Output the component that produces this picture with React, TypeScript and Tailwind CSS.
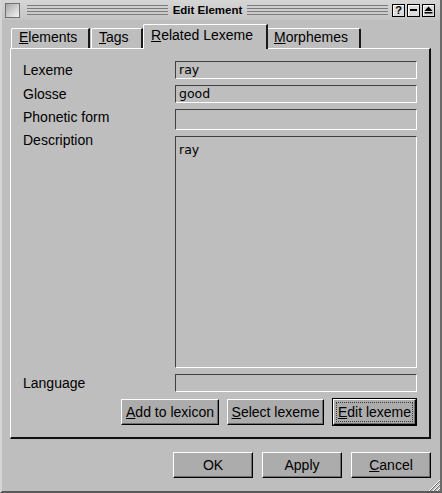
import React from 'react';

const Lines = () => (
  <div className="flex-1 flex flex-col gap-[2px]">
    <div className="h-px bg-[#7c7c7c]" />
    <div className="h-px bg-[#7c7c7c]" />
    <div className="h-px bg-[#7c7c7c]" />
    <div className="h-px bg-[#7c7c7c]" />
  </div>
);

const TitleButton = ({ children }: { children: React.ReactNode }) => (
  <div className="w-[13px] h-[13px] border border-black bg-[#dcdcdc] flex items-center justify-center shadow-[inset_1px_1px_0_#ffffff]">
    {children}
  </div>
);

const Field = ({ value, h }: { value?: string; h: string }) => (
  <div
    className={`${h} w-[242px] border border-t-[#404040] border-l-[#404040] border-b-white border-r-white pl-[3px] flex items-center text-[12.5px] leading-[16px] text-black`}
    style={{ fontFamily: '"DejaVu Sans", sans-serif' }}
  >
    {value}
  </div>
);

const Btn = ({ w, children }: { w: string; children: React.ReactNode }) => (
  <div
    className={`${w} relative h-[26px] flex items-center justify-center bg-[#acacac] border border-t-white border-l-white border-b-black border-r-black shadow-[inset_-1px_-1px_0_#6e6e6e] text-[14px] leading-[16px] text-black`}
  >
    {children}
  </div>
);

export default function App() {
  return (
    <div
      className="relative w-[442px] h-[493px] bg-[#bebebe] flex flex-col border-l-2 border-l-[#d6d6d6] border-r-2 border-r-[#6a6a6a] border-b-2 border-b-[#5a5a5a] overflow-hidden"
      style={{ fontFamily: '"Liberation Sans", Arial, sans-serif' }}
    >
      {/* Title bar */}
      <div className="h-[20px] flex items-center pl-[3px] pr-[5px] bg-linear-to-b from-[#d6d6d6] to-[#c4c4c4]">
        <div className="w-[15px] h-[15px] border border-[#707070] bg-linear-to-br from-[#a8a8a8] to-[#f4f4f4]" />
        <div className="flex-1 flex items-center ml-[7px] mr-[4px] gap-[5px]">
          <Lines />
          <span className="text-[11.5px] font-bold leading-[14px] text-black">Edit Element</span>
          <Lines />
        </div>
        <div className="flex gap-[2px]">
          <TitleButton>
            <span className="text-[11px] font-bold leading-[11px] text-black">?</span>
          </TitleButton>
          <TitleButton>
            <div className="w-[7px] h-[2px] bg-black" />
          </TitleButton>
          <TitleButton>
            <svg width="9" height="8" viewBox="0 0 9 8">
              <polygon points="4.5,0.5 8.5,5 0.5,5" fill="#000" />
              <rect x="0.5" y="6" width="8" height="1.5" fill="#000" />
            </svg>
          </TitleButton>
        </div>
      </div>

      <div className="flex flex-col pl-[8px] pr-[9px]">
        {/* Tabs */}
        <div className="h-[28px] flex items-end text-[14px] leading-[16px] text-black">
          <div className="ml-[1px] w-[79px] h-[20px] border-t border-l border-t-white border-l-white border-r-2 border-r-[#1a1a1a] rounded-tl-[2px] pl-[7px]">
            <u>E</u>lements
          </div>
          <div className="ml-[1px] w-[52px] h-[20px] border-t border-l border-t-white border-l-white border-r-2 border-r-[#1a1a1a] rounded-tl-[2px] pl-[7px]">
            <u>T</u>ags
          </div>
          <div className="relative z-10 -mb-px w-[125px] h-[25px] bg-[#bebebe] border-t border-l border-t-white border-l-white border-r-2 border-r-[#1a1a1a] rounded-tl-[2px] pl-[7px] pt-[2px]">
            <u>R</u>elated Lexeme
          </div>
          <div className="w-[93px] h-[20px] border-t border-t-white border-r-2 border-r-[#1a1a1a] rounded-tr-[2px] pl-[6px]">
            <u>M</u>orphemes
          </div>
        </div>

        {/* Panel */}
        <div className="h-[391px] border-t border-l border-t-white border-l-white border-r-2 border-b-2 border-r-[#111] border-b-[#111] pl-[12px] pr-[12px] pt-[12px] flex flex-col text-[14px] leading-[16px] text-black">
          <div className="flex items-center">
            <span className="w-[152px]">Lexeme</span>
            <Field h="h-[18px]" value="ray" />
          </div>
          <div className="flex items-center mt-[6px]">
            <span className="w-[152px]">Glosse</span>
            <Field h="h-[18px]" value="good" />
          </div>
          <div className="flex items-center mt-[6px]">
            <span className="w-[152px] pb-[5px]">Phonetic form</span>
            <Field h="h-[21px]" />
          </div>
          <div className="flex items-start mt-[6px]">
            <span className="w-[152px] -mt-[4px]">Description</span>
            <div
              className="h-[232px] w-[242px] border border-t-[#404040] border-l-[#404040] border-b-white border-r-white pl-[3px] pt-[5px] text-[12.5px] leading-[16px]"
              style={{ fontFamily: '"DejaVu Sans", sans-serif' }}
            >
              ray
            </div>
          </div>
          <div className="flex items-center mt-[6px]">
            <span className="w-[152px]">Language</span>
            <Field h="h-[18px]" />
          </div>
          <div className="flex justify-end items-center gap-[8px] mt-[6px]">
            <Btn w="w-[98px]">
              <span><u>A</u>dd to lexicon</span>
            </Btn>
            <Btn w="w-[97px]">
              <span><u>S</u>elect lexeme</span>
            </Btn>
            <div className="border border-black">
              <Btn w="w-[83px]">
                <span><u>E</u>dit lexeme</span>
                <div className="absolute inset-[2px] border border-dotted border-[#3a3a3a]" />
              </Btn>
            </div>
          </div>
        </div>

        {/* Bottom buttons */}
        <div className="flex justify-end gap-[9px] mt-[13px]">
          <Btn w="w-[80px]">OK</Btn>
          <Btn w="w-[80px]">Apply</Btn>
          <Btn w="w-[80px]">
            <span><u>C</u>ancel</span>
          </Btn>
        </div>
      </div>

      {/* resize grip */}
      <svg className="absolute right-0 bottom-0" width="14" height="14" viewBox="0 0 14 14">
        <line x1="3" y1="14" x2="14" y2="3" stroke="#ffffff" strokeWidth="1" />
        <line x1="4" y1="14" x2="14" y2="4" stroke="#707070" strokeWidth="1" />
        <line x1="7" y1="14" x2="14" y2="7" stroke="#ffffff" strokeWidth="1" />
        <line x1="8" y1="14" x2="14" y2="8" stroke="#707070" strokeWidth="1" />
        <line x1="11" y1="14" x2="14" y2="11" stroke="#ffffff" strokeWidth="1" />
        <line x1="12" y1="14" x2="14" y2="12" stroke="#707070" strokeWidth="1" />
      </svg>
    </div>
  );
}
